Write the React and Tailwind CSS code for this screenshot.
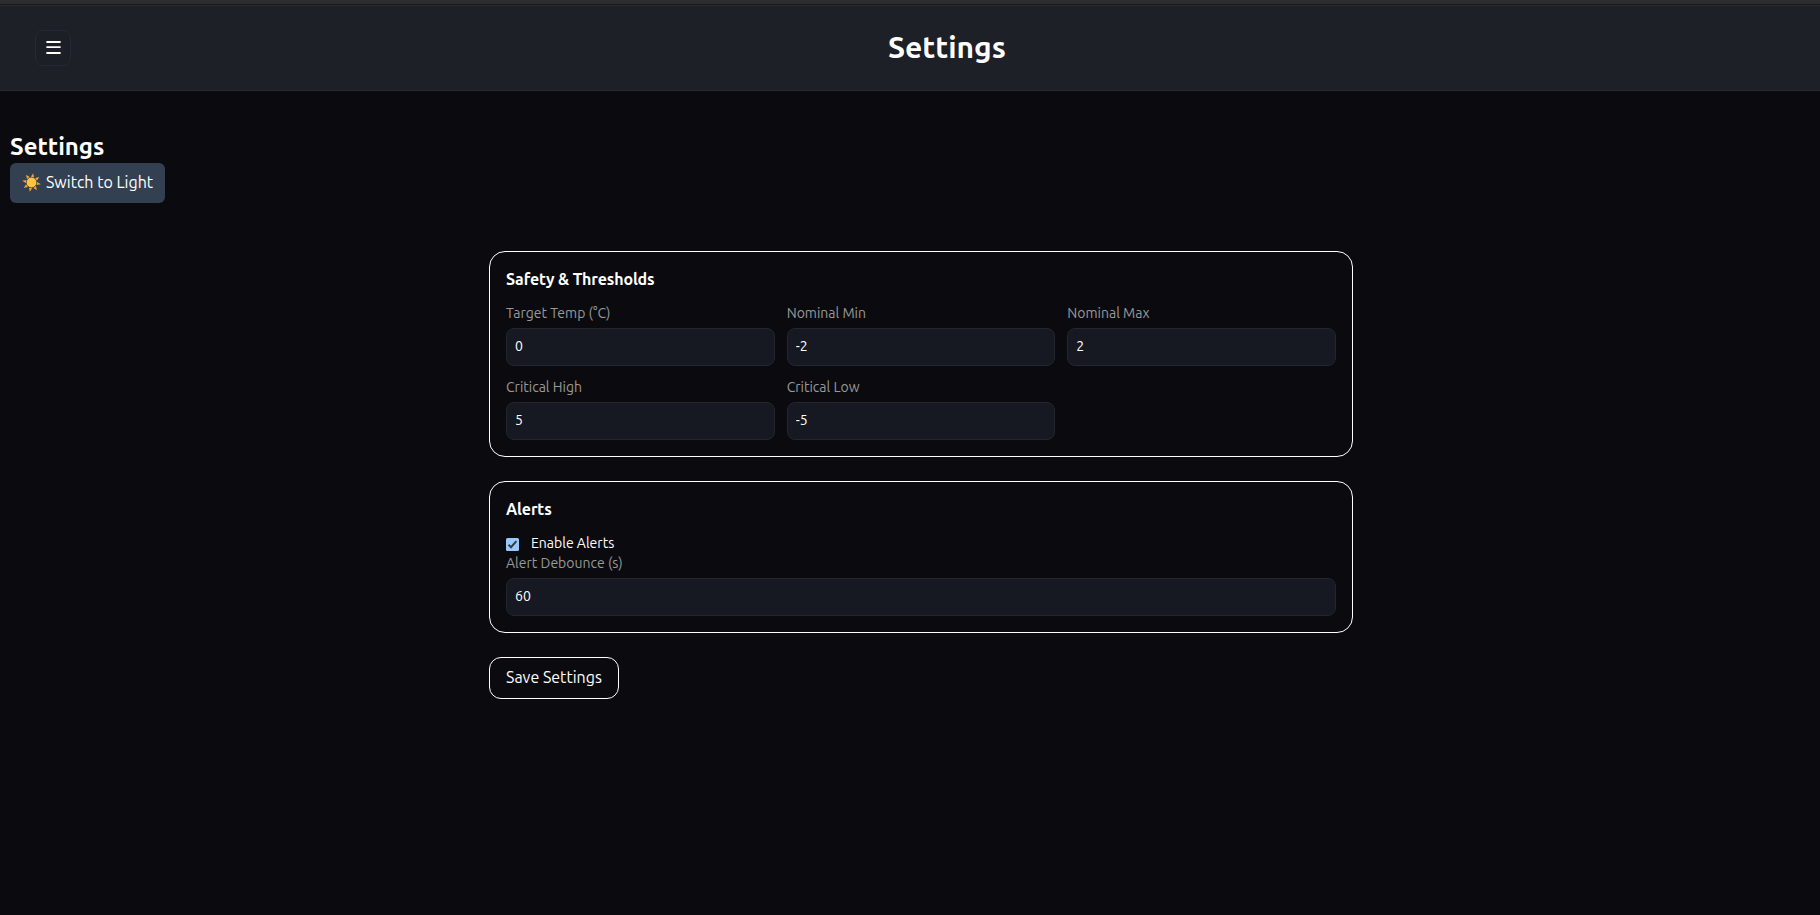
const thresholds = [
  { label: "Target Temp (°C)", value: "0" },
  { label: "Nominal Min", value: "-2" },
  { label: "Nominal Max", value: "2" },
  { label: "Critical High", value: "5" },
  { label: "Critical Low", value: "-5" },
];

function Field({ label, value }) {
  return (
    <label className="block">
      <span className="mb-1 block h-5 text-sm leading-[18px] text-[#999999]">{label}</span>
      <input
        defaultValue={value}
        className="block h-[38px] w-full rounded-lg border border-[#24262f] bg-[#161921] px-2 pb-0.5 text-sm text-white outline-none"
      />
    </label>
  );
}

function Card({ title, children }) {
  return (
    <section className="rounded-2xl border border-white p-4">
      <h3 className="mb-3 h-6 text-base leading-[22px] font-semibold tracking-[-0.13px]">{title}</h3>
      {children}
    </section>
  );
}

function Sun() {
  return (
    <svg className="mr-[5px] size-[19px] shrink-0" viewBox="0 0 19 19">
      {[10, 55, 100, 145, 190, 235, 280, 325].map((angle) => (
        <path key={angle} d="M9.5 0 11.1 4 7.9 4Z" fill="#f4a035" transform={`rotate(${angle} 9.5 9.5)`} />
      ))}
      <circle cx="9.5" cy="9.5" r="4.9" fill="#fdc43f" />
    </svg>
  );
}

export default function App() {
  return (
    <div className="flex h-[915px] flex-col overflow-hidden bg-[#0b0b0f] font-['Ubuntu','Noto_Sans',sans-serif] text-white">
      <div className="h-[5px] shrink-0 border-b border-[#191919] bg-[#2d2d2d]" />
      <header className="grid h-[86px] shrink-0 grid-cols-[36px_1fr] items-center border-y border-[#282b33] bg-[#1d2027] pl-[35px]">
        <button className="flex size-9 items-center justify-center rounded-lg border border-[#262932] bg-[#1d1f26] pb-px" aria-label="Menu">
          <svg className="h-[13px] w-[15px]" viewBox="0 0 15 13" fill="#fff">
            <path d="M.4 0h14.2v2H.4zM.4 5.2h14.2v1.8H.4zM.4 11h14.2v2H.4z" />
          </svg>
        </button>
        <h1 className="pb-0.5 pl-[3px] text-center text-3xl font-semibold">Settings</h1>
      </header>
      <main className="flex-1 px-2.5 pt-10">
        <h2 className="text-2xl font-semibold">Settings</h2>
        <button className="flex h-10 w-[155px] items-center rounded-md bg-[#334052] px-3 pb-0.5 text-base whitespace-nowrap">
          <Sun />
          Switch to Light
        </button>
        <div className="mt-12 ml-[479px] flex w-[864px] flex-col gap-6">
          <Card title="Safety & Thresholds">
            <div className="grid grid-cols-3 gap-3">
              {thresholds.map((t) => (
                <Field key={t.label} {...t} />
              ))}
            </div>
          </Card>
          <Card title="Alerts">
            <div className="flex h-5 items-center gap-3">
              <svg className="mt-px size-[13px]" viewBox="0 0 13 13">
                <rect width="13" height="13" rx="1.5" fill="#99c8ff" />
                <path d="M2.5 6.7 5 9.2 10.4 3.2" fill="none" stroke="#3b3b3b" strokeWidth="2" />
              </svg>
              <span className="h-5 text-sm leading-[18px]">Enable Alerts</span>
            </div>
            <Field label="Alert Debounce (s)" value="60" />
          </Card>
          <button className="h-[42px] w-[130px] rounded-xl border border-white px-4 pb-0.5 text-left text-base whitespace-nowrap">
            Save Settings
          </button>
        </div>
      </main>
    </div>
  );
}
